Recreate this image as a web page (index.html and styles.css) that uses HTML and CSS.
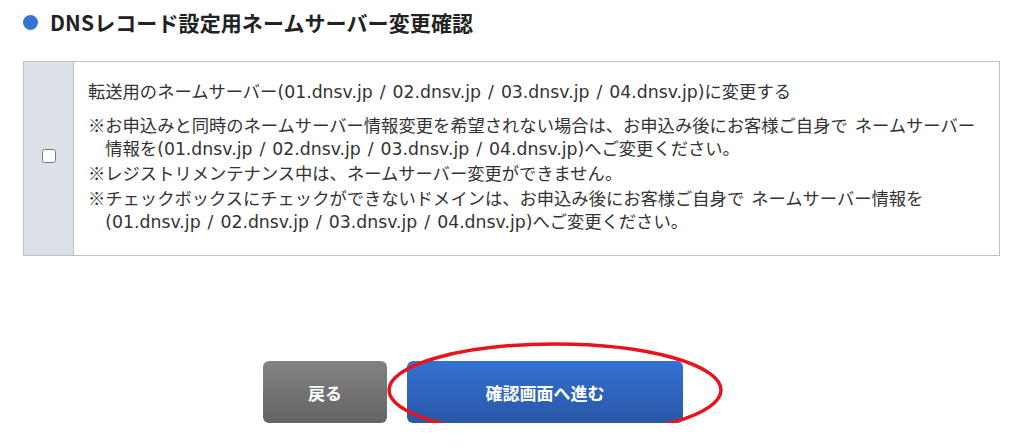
FILE: index.html
```html
<!DOCTYPE html>
<html lang="ja">

<head>
    <meta charset="UTF-8">
    <meta name="viewport" content="width=device-width, initial-scale=1.0">
    <title>DNSレコード設定用ネームサーバー変更確認</title>
    <link rel="stylesheet" href="styles.css">
</head>

<body>

    <div class="container">
        <h2 class="section-title"><span class="dot"></span>DNSレコード設定用ネームサーバー変更確認</h2>

        <table class="ns-table">
            <tr>
                <td class="check-cell"><input type="checkbox" id="nsChange"></td>
                <td class="text-cell">
                    <p class="lead">転送用のネームサーバー(01.dnsv.jp / 02.dnsv.jp / 03.dnsv.jp / 04.dnsv.jp)に変更する</p>
                    <p class="note"><span class="mark">※</span>お申込みと同時のネームサーバー情報変更を希望されない場合は、お申込み後にお客様ご自身で ネームサーバー情報を(01.dnsv.jp / 02.dnsv.jp / 03.dnsv.jp / 04.dnsv.jp)へご変更ください。</p>
                    <p class="note"><span class="mark">※</span>レジストリメンテナンス中は、ネームサーバー変更ができません。</p>
                    <p class="note"><span class="mark">※</span>チェックボックスにチェックができないドメインは、お申込み後にお客様ご自身で ネームサーバー情報を(01.dnsv.jp / 02.dnsv.jp / 03.dnsv.jp / 04.dnsv.jp)へご変更ください。</p>
                </td>
            </tr>
        </table>

        <div class="actions">
            <button class="btn btn-back">戻る</button>
            <div class="next-wrap">
                <button class="btn btn-next">確認画面へ進む</button>
                <!-- hand-drawn annotation -->
                <svg class="circle-mark" width="340" height="100" viewBox="0 0 340 100">
                    <ellipse cx="169" cy="49" rx="166" ry="46" fill="none" stroke="#e8131c" stroke-width="3.5"/>
                </svg>
            </div>
        </div>
    </div>

</body>

</html>
```

FILE: styles.css
```css
body {
    margin: 0;
    background: #fff;
    color: #333;
    font-family: 'Noto Sans CJK JP', 'Noto Sans', sans-serif;
}

.container {
    width: 977px;
    padding: 0 0 0 23px;
}

.section-title {
    display: flex;
    align-items: center;
    margin: 0;
    padding-top: 9px;
    height: 26px;
    font-size: 21px;
    font-weight: bold;
    color: #222;
    letter-spacing: 0.1px;
}

.dot {
    width: 15px;
    height: 15px;
    border-radius: 50%;
    background: #3474d4;
    margin-right: 12px;
}

.ns-table {
    width: 100%;
    margin-top: 26px;
    border-collapse: collapse;
    border: 1px solid #c0c0c6;
}

.check-cell {
    width: 49px;
    padding: 0 0 5px 0;
    background: #dce0e7;
    border-right: 1px solid #c0c0c6;
    text-align: center;
    vertical-align: middle;
}

.check-cell input {
    width: 14px;
    height: 14px;
    margin: 0;
}

.text-cell {
    padding: 19px 22px 21px 14px;
    font-family: 'DejaVu Sans', 'Noto Sans CJK JP', sans-serif;
    font-size: 17.3px;
    line-height: 23px;
    word-spacing: 1.5px;
    color: #333;
}

.text-cell p {
    margin: 0;
}

.lead {
    margin-bottom: 9px !important;
}

.note {
    padding-left: 1em;
    text-indent: -1em;
}

.mark {
    font-family: 'Noto Sans CJK JP', sans-serif;
}

.actions {
    display: flex;
    gap: 20px;
    margin-top: 105px;
    padding-left: 240px;
}

.btn {
    height: 62px;
    border: none;
    border-radius: 6px;
    color: #fff;
    font-family: 'Noto Sans CJK JP', sans-serif;
    font-size: 17px;
    font-weight: bold;
}

.btn-back {
    width: 124px;
    background: linear-gradient(#828282, #646464);
}

.next-wrap {
    position: relative;
}

.btn-next {
    width: 276px;
    background: linear-gradient(#3372d4, #2957a6);
}

.circle-mark {
    position: absolute;
    left: -21px;
    top: -20px;
    pointer-events: none;
}
```
